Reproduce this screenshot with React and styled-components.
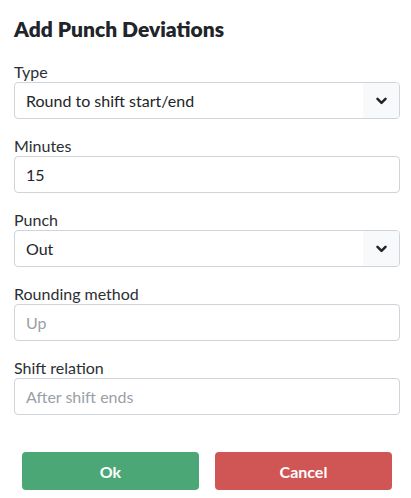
import React from 'react';
import styled, { createGlobalStyle } from 'styled-components';

const colors = {
  text: '#212529',
  label: '#2b2f33',
  border: '#ced4da',
  placeholder: '#9aa0a6',
  addon: '#f8f9fa',
  ok: '#4ba776',
  cancel: '#d05656',
};

const GlobalStyle = createGlobalStyle`
  body {
    margin: 0;
    background: #ffffff;
    font-family: Lato, "Open Sans", Arial, sans-serif;
    color: ${colors.text};
  }
`;

const Modal = styled.div`
  width: 411px;
  height: 498px;
  box-sizing: border-box;
  padding: 16px 11px 0 14px;
`;

const Title = styled.h2`
  margin: 0 0 20px;
  font-size: 21px;
  line-height: 26px;
  font-weight: 800;
  color: ${colors.text};
`;

const FieldGroup = styled.div`
  display: flex;
  flex-direction: column;
  margin-bottom: 17px;
`;

const Label = styled.label`
  font-size: 16px;
  line-height: 20px;
  color: ${colors.label};
`;

const Box = styled.div`
  display: flex;
  align-items: stretch;
  height: 37px;
  box-sizing: border-box;
  border: 1px solid ${colors.border};
  border-radius: 4px;
  overflow: hidden;
`;

const Value = styled.div`
  flex: 1;
  display: flex;
  align-items: center;
  padding-left: 11px;
  font-size: 16px;
  color: ${(p) => (p.$placeholder ? colors.placeholder : colors.text)};
`;

const Addon = styled.div`
  width: 36px;
  display: flex;
  align-items: center;
  justify-content: center;
  background: ${colors.addon};
`;

const Actions = styled.div`
  display: flex;
  gap: 16px;
  padding: 20px 8px 0;
`;

const Button = styled.button`
  flex: 1;
  height: 38px;
  border: none;
  border-radius: 4px;
  background: ${(p) => p.$bg};
  color: #ffffff;
  font-family: inherit;
  font-size: 16px;
  font-weight: 700;
`;

const Chevron = () => (
  <svg width="11" height="8" viewBox="0 0 11 8">
    <path d="M1.5 1.8 L5.5 5.8 L9.5 1.8" fill="none" stroke="#212529" strokeWidth="2.5" strokeLinecap="round" strokeLinejoin="round" />
  </svg>
);

const fields = [
  { label: 'Type', value: 'Round to shift start/end', select: true },
  { label: 'Minutes', value: '15' },
  { label: 'Punch', value: 'Out', select: true },
  { label: 'Rounding method', value: 'Up', placeholder: true },
  { label: 'Shift relation', value: 'After shift ends', placeholder: true },
];

export default function App() {
  return (
    <>
      <GlobalStyle />
      <Modal>
        <Title>Add Punch Deviations</Title>
        {fields.map((f) => (
          <FieldGroup key={f.label}>
            <Label>{f.label}</Label>
            <Box>
              <Value $placeholder={f.placeholder}>{f.value}</Value>
              {f.select && (
                <Addon>
                  <Chevron />
                </Addon>
              )}
            </Box>
          </FieldGroup>
        ))}
        <Actions>
          <Button $bg={colors.ok}>Ok</Button>
          <Button $bg={colors.cancel}>Cancel</Button>
        </Actions>
      </Modal>
    </>
  );
}
